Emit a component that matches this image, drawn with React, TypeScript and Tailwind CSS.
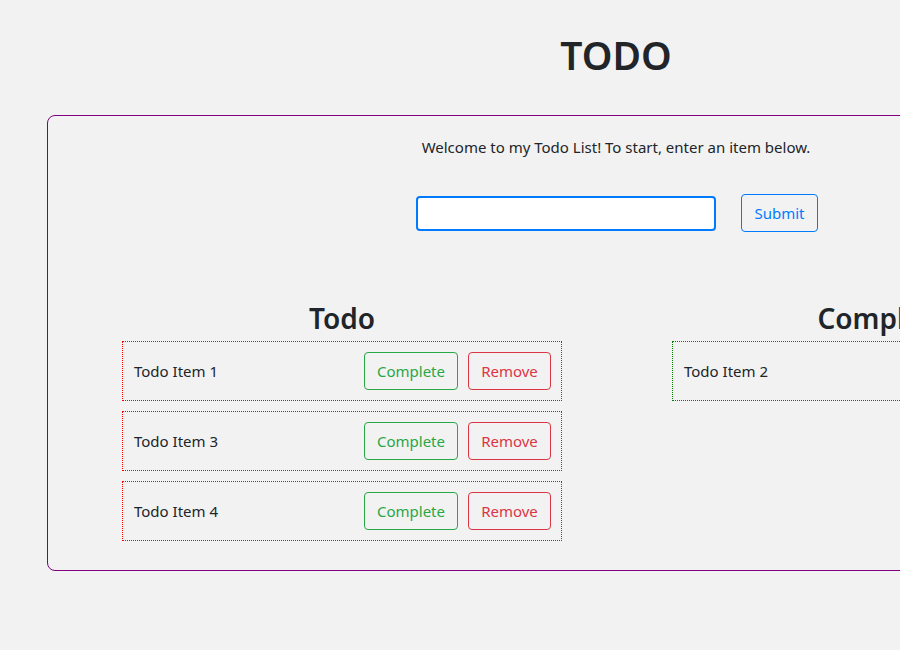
const todo = ["Todo Item 1", "Todo Item 3", "Todo Item 4"];
const done = ["Todo Item 2"];

function Item({ label, complete }: { label: string; complete?: boolean }) {
  return (
    <div
      className={`flex h-[60px] items-center justify-between border border-dotted pr-[10px] pl-[11px] ${
        complete ? "border-[#008000]" : "border-[#ff0000]"
      }`}
    >
      <span>{label}</span>
      <div className="flex gap-[10px]">
        {!complete && (
          <button className="h-[38px] w-[94px] rounded border border-[#28a745] text-[#28a745]">
            Complete
          </button>
        )}
        <button className="h-[38px] w-[83px] rounded border border-[#dc3545] text-[#dc3545]">
          Remove
        </button>
      </div>
    </div>
  );
}

function Column({ title, items, complete }: { title: string; items: string[]; complete?: boolean }) {
  return (
    <div className="w-[440px]">
      <h2 className="mb-1 text-center text-[28px] leading-[38px] font-semibold">{title}</h2>
      <div className="flex flex-col gap-[10px]">
        {items.map((v) => (
          <Item key={v} label={v} complete={complete} />
        ))}
      </div>
    </div>
  );
}

export default function App() {
  return (
    <div
      className="min-h-screen w-full overflow-hidden bg-[#f2f2f2] text-[15px] text-[#212529]"
      style={{ fontFamily: '"Segoe UI", "Noto Sans", sans-serif' }}
    >
      <div className="w-[1232px]">
        <h1 className="pt-[31px] text-center text-[39px] leading-[48px] font-semibold">TODO</h1>
        <div className="mx-[47px] mt-[36px] h-[456px] rounded-lg border border-[#800080]">
          <p className="mt-[19px] text-center leading-6">
            Welcome to my Todo List! To start, enter an item below.
          </p>
          <form className="mt-[35px] ml-[2px] flex items-center justify-center gap-[25px]">
            <input
              type="text"
              className="h-[35px] w-[300px] rounded border-2 border-[#007bff] bg-white px-2 outline-none"
            />
            <button
              type="button"
              className="h-[38px] w-[77px] rounded border border-[#007bff] text-[#007bff]"
            >
              Submit
            </button>
          </form>
          <div className="mt-[67px] flex gap-[110px] pl-[74px]">
            <Column title="Todo" items={todo} />
            <Column title="Completed" items={done} complete />
          </div>
        </div>
      </div>
    </div>
  );
}
